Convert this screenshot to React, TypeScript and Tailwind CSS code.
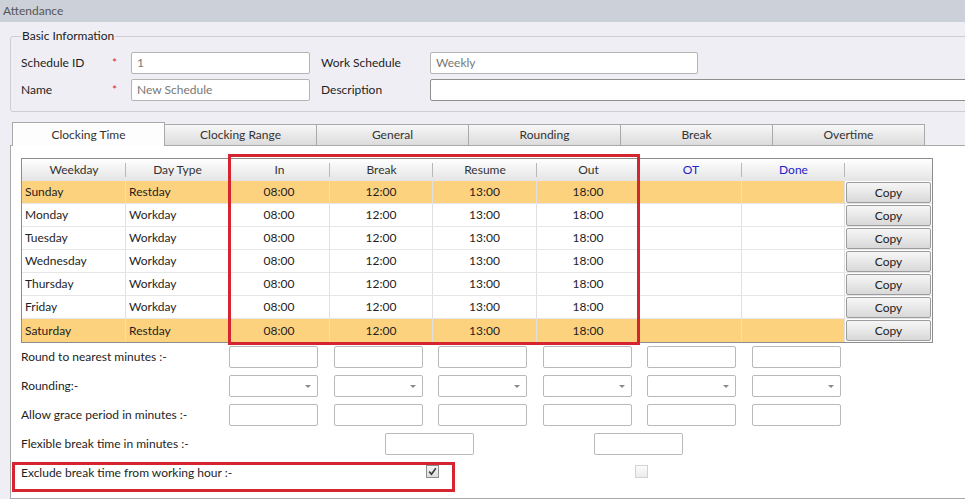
import React from "react";

const days = [
  { day: "Sunday", type: "Restday", rest: true },
  { day: "Monday", type: "Workday", rest: false },
  { day: "Tuesday", type: "Workday", rest: false },
  { day: "Wednesday", type: "Workday", rest: false },
  { day: "Thursday", type: "Workday", rest: false },
  { day: "Friday", type: "Workday", rest: false },
  { day: "Saturday", type: "Restday", rest: true },
];

const tabs = ["Clocking Time", "Clocking Range", "General", "Rounding", "Break", "Overtime"];

const headers = [
  { label: "Weekday", blue: false },
  { label: "Day Type", blue: false },
  { label: "In", blue: false },
  { label: "Break", blue: false },
  { label: "Resume", blue: false },
  { label: "Out", blue: false },
  { label: "OT", blue: true },
  { label: "Done", blue: true },
  { label: "", blue: false },
];

const gridCols = "grid grid-cols-[104px_103px_101px_103px_104px_103px_102px_103px_87px]";

const Box = ({ className = "" }: { className?: string }) => (
  <div className={`h-[22px] w-[89px] shrink-0 rounded-[2px] border border-[#b9b9b9] bg-white ${className}`} />
);

const Combo = () => (
  <div className="relative h-[22px] w-[89px] shrink-0 rounded-[2px] border border-[#b9b9b9] bg-white">
    <span className="absolute right-[6px] top-[9px] h-0 w-0 border-x-[3px] border-t-[3px] border-x-transparent border-t-[#8a8a8a]" />
  </div>
);

const Check = ({ checked }: { checked: boolean }) => (
  <div
    className={`flex h-[13px] w-[13px] items-center justify-center border ${
      checked ? "border-[#8e8e8e] bg-gradient-to-b from-[#f4f4f4] to-[#dcdcdc]" : "border-[#d2d2d2] bg-gradient-to-b from-[#fbfbfb] to-[#ececec]"
    }`}
  >
    {checked && (
      <svg width="9" height="9" viewBox="0 0 9 9">
        <path d="M1.2 4.6 L3.5 7.2 L7.8 1.2" fill="none" stroke="#3a3a3a" strokeWidth="1.6" />
      </svg>
    )}
  </div>
);

const Row = ({ label, children }: { label: string; children: React.ReactNode }) => (
  <div className="flex h-[22px] items-center">
    <div className="w-[208px] shrink-0 whitespace-nowrap">{label}</div>
    {children}
  </div>
);

export default function App() {
  return (
    <div className="relative h-[499px] w-[965px] overflow-hidden bg-[#efeef4] font-['Lato',sans-serif] text-[12px] leading-none text-[#1e1e1e]">
      {/* title bar */}
      <div className="flex h-[22px] items-center bg-[#ccd0d9] px-[3px] text-[#555]">Attendance</div>

      {/* basic information */}
      <fieldset className="ml-[10px] mt-[8px] w-[980px] rounded-[3px] border border-[#cdcdd3] px-[10px] pb-[10px] pt-[10px]">
        <legend className="px-[1px] text-[#222]">Basic Information</legend>
        <div className="flex flex-col gap-[5px]">
          <div className="flex h-[22px] items-center">
            <div className="w-[91px]">Schedule ID</div>
            <div className="w-[19px] text-[#d0303a]">*</div>
            <div className="flex h-[22px] w-[179px] items-center rounded-[2px] border border-[#b4b4b4] bg-white px-[5px] text-[#777]">1</div>
            <div className="w-[120px] pl-[11px]">Work Schedule</div>
            <div className="flex h-[22px] w-[268px] items-center rounded-[2px] border border-[#b4b4b4] bg-white px-[5px] text-[#777]">Weekly</div>
          </div>
          <div className="flex h-[22px] items-center">
            <div className="w-[91px]">Name</div>
            <div className="w-[19px] text-[#d0303a]">*</div>
            <div className="flex h-[22px] w-[179px] items-center rounded-[2px] border border-[#b4b4b4] bg-white px-[5px] text-[#777]">New Schedule</div>
            <div className="w-[120px] pl-[11px]">Description</div>
            <div className="h-[22px] w-[560px] rounded-[2px] border border-[#8f8f8f] bg-white" />
          </div>
        </div>
      </fieldset>

      {/* tabs */}
      <div className="ml-[12px] mt-[10px] flex items-end">
        {tabs.map((t, i) =>
          i === 0 ? (
            <div key={t} className="relative z-10 -mb-px flex h-[24px] w-[153px] items-center justify-center border border-b-0 border-[#a9a9a9] bg-[#fdfdfd] text-[#333]">
              {t}
            </div>
          ) : (
            <div key={t} className="flex h-[21px] w-[152px] items-center justify-center border border-l-0 border-b-0 border-[#a9a9a9] bg-gradient-to-b from-[#f7f7f7] via-[#e9e9e9] to-[#dcdcdc] text-[#333]">
              {t}
            </div>
          )
        )}
      </div>

      {/* tab panel */}
      <div className="relative ml-[10px] h-[354px] w-[970px] border border-[#a9a9a9] bg-white pl-[10px] pt-[12px]">
        <div className="w-[912px] border border-[#8c8c8c]">
          <div className={`${gridCols} h-[22px] bg-gradient-to-b from-white to-[#e4e4e4] text-[#333]`}>
            {headers.map((h, i) => (
              <div key={i} className={`relative flex items-center justify-center ${h.blue ? "text-[#2323c8]" : ""}`}>
                {h.label}
                {i < headers.length - 1 && <span className="absolute bottom-[4px] right-0 top-[4px] w-px bg-[#b8b8b8]" />}
              </div>
            ))}
          </div>
          {days.map((d, r) => (
            <div key={d.day} className={`${gridCols} h-[23px] ${d.rest ? "bg-[#fdd27f]" : "bg-white"} ${r < days.length - 1 ? "border-b border-[#e6e6e6]" : ""}`}>
              <div className="flex items-center border-r border-[#e0e0e0] pl-[3px]">{d.day}</div>
              <div className="flex items-center border-r border-[#e0e0e0] pl-[3px]">{d.type}</div>
              {["08:00", "12:00", "13:00", "18:00"].map((v) => (
                <div key={v} className="flex items-center justify-center border-r border-[#e0e0e0]">{v}</div>
              ))}
              <div className="border-r border-[#e0e0e0]" />
              <div className="border-r border-[#e0e0e0]" />
              <div className="bg-white px-[1px] pt-[1px]">
                <div className="flex h-[21px] items-center justify-center rounded-[2px] border border-[#9c9c9c] bg-gradient-to-b from-[#f6f6f6] via-[#e8e8e8] to-[#d8d8d8] text-[#222]">
                  Copy
                </div>
              </div>
            </div>
          ))}
        </div>

        {/* settings rows */}
        <div className="mt-[3px] flex flex-col gap-[7px]">
          <Row label="Round to nearest minutes :-">
            <div className="flex gap-[15.6px]">
              {[0, 1, 2, 3, 4, 5].map((i) => <Box key={i} />)}
            </div>
          </Row>
          <Row label="Rounding:-">
            <div className="flex gap-[15.6px]">
              {[0, 1, 2, 3, 4, 5].map((i) => <Combo key={i} />)}
            </div>
          </Row>
          <Row label="Allow grace period in minutes :-">
            <div className="flex gap-[15.6px]">
              {[0, 1, 2, 3, 4, 5].map((i) => <Box key={i} />)}
            </div>
          </Row>
          <Row label="Flexible break time in minutes :-">
            <Box className="ml-[156px]" />
            <Box className="ml-[120px]" />
          </Row>
          <Row label="Exclude break time from working hour :-">
            <div className="ml-[197px] mb-[3px]">
              <Check checked />
            </div>
            <div className="ml-[196px] mb-[3px]">
              <Check checked={false} />
            </div>
          </Row>
        </div>

        {/* highlight annotations */}
        <div className="pointer-events-none absolute left-[217px] top-[8px] h-[191px] w-[412px] border-[3px] border-[#d52530]" />
        <div className="pointer-events-none absolute left-[1px] top-[316px] h-[30px] w-[443px] border-[3px] border-[#d52530]" />
      </div>
    </div>
  );
}
